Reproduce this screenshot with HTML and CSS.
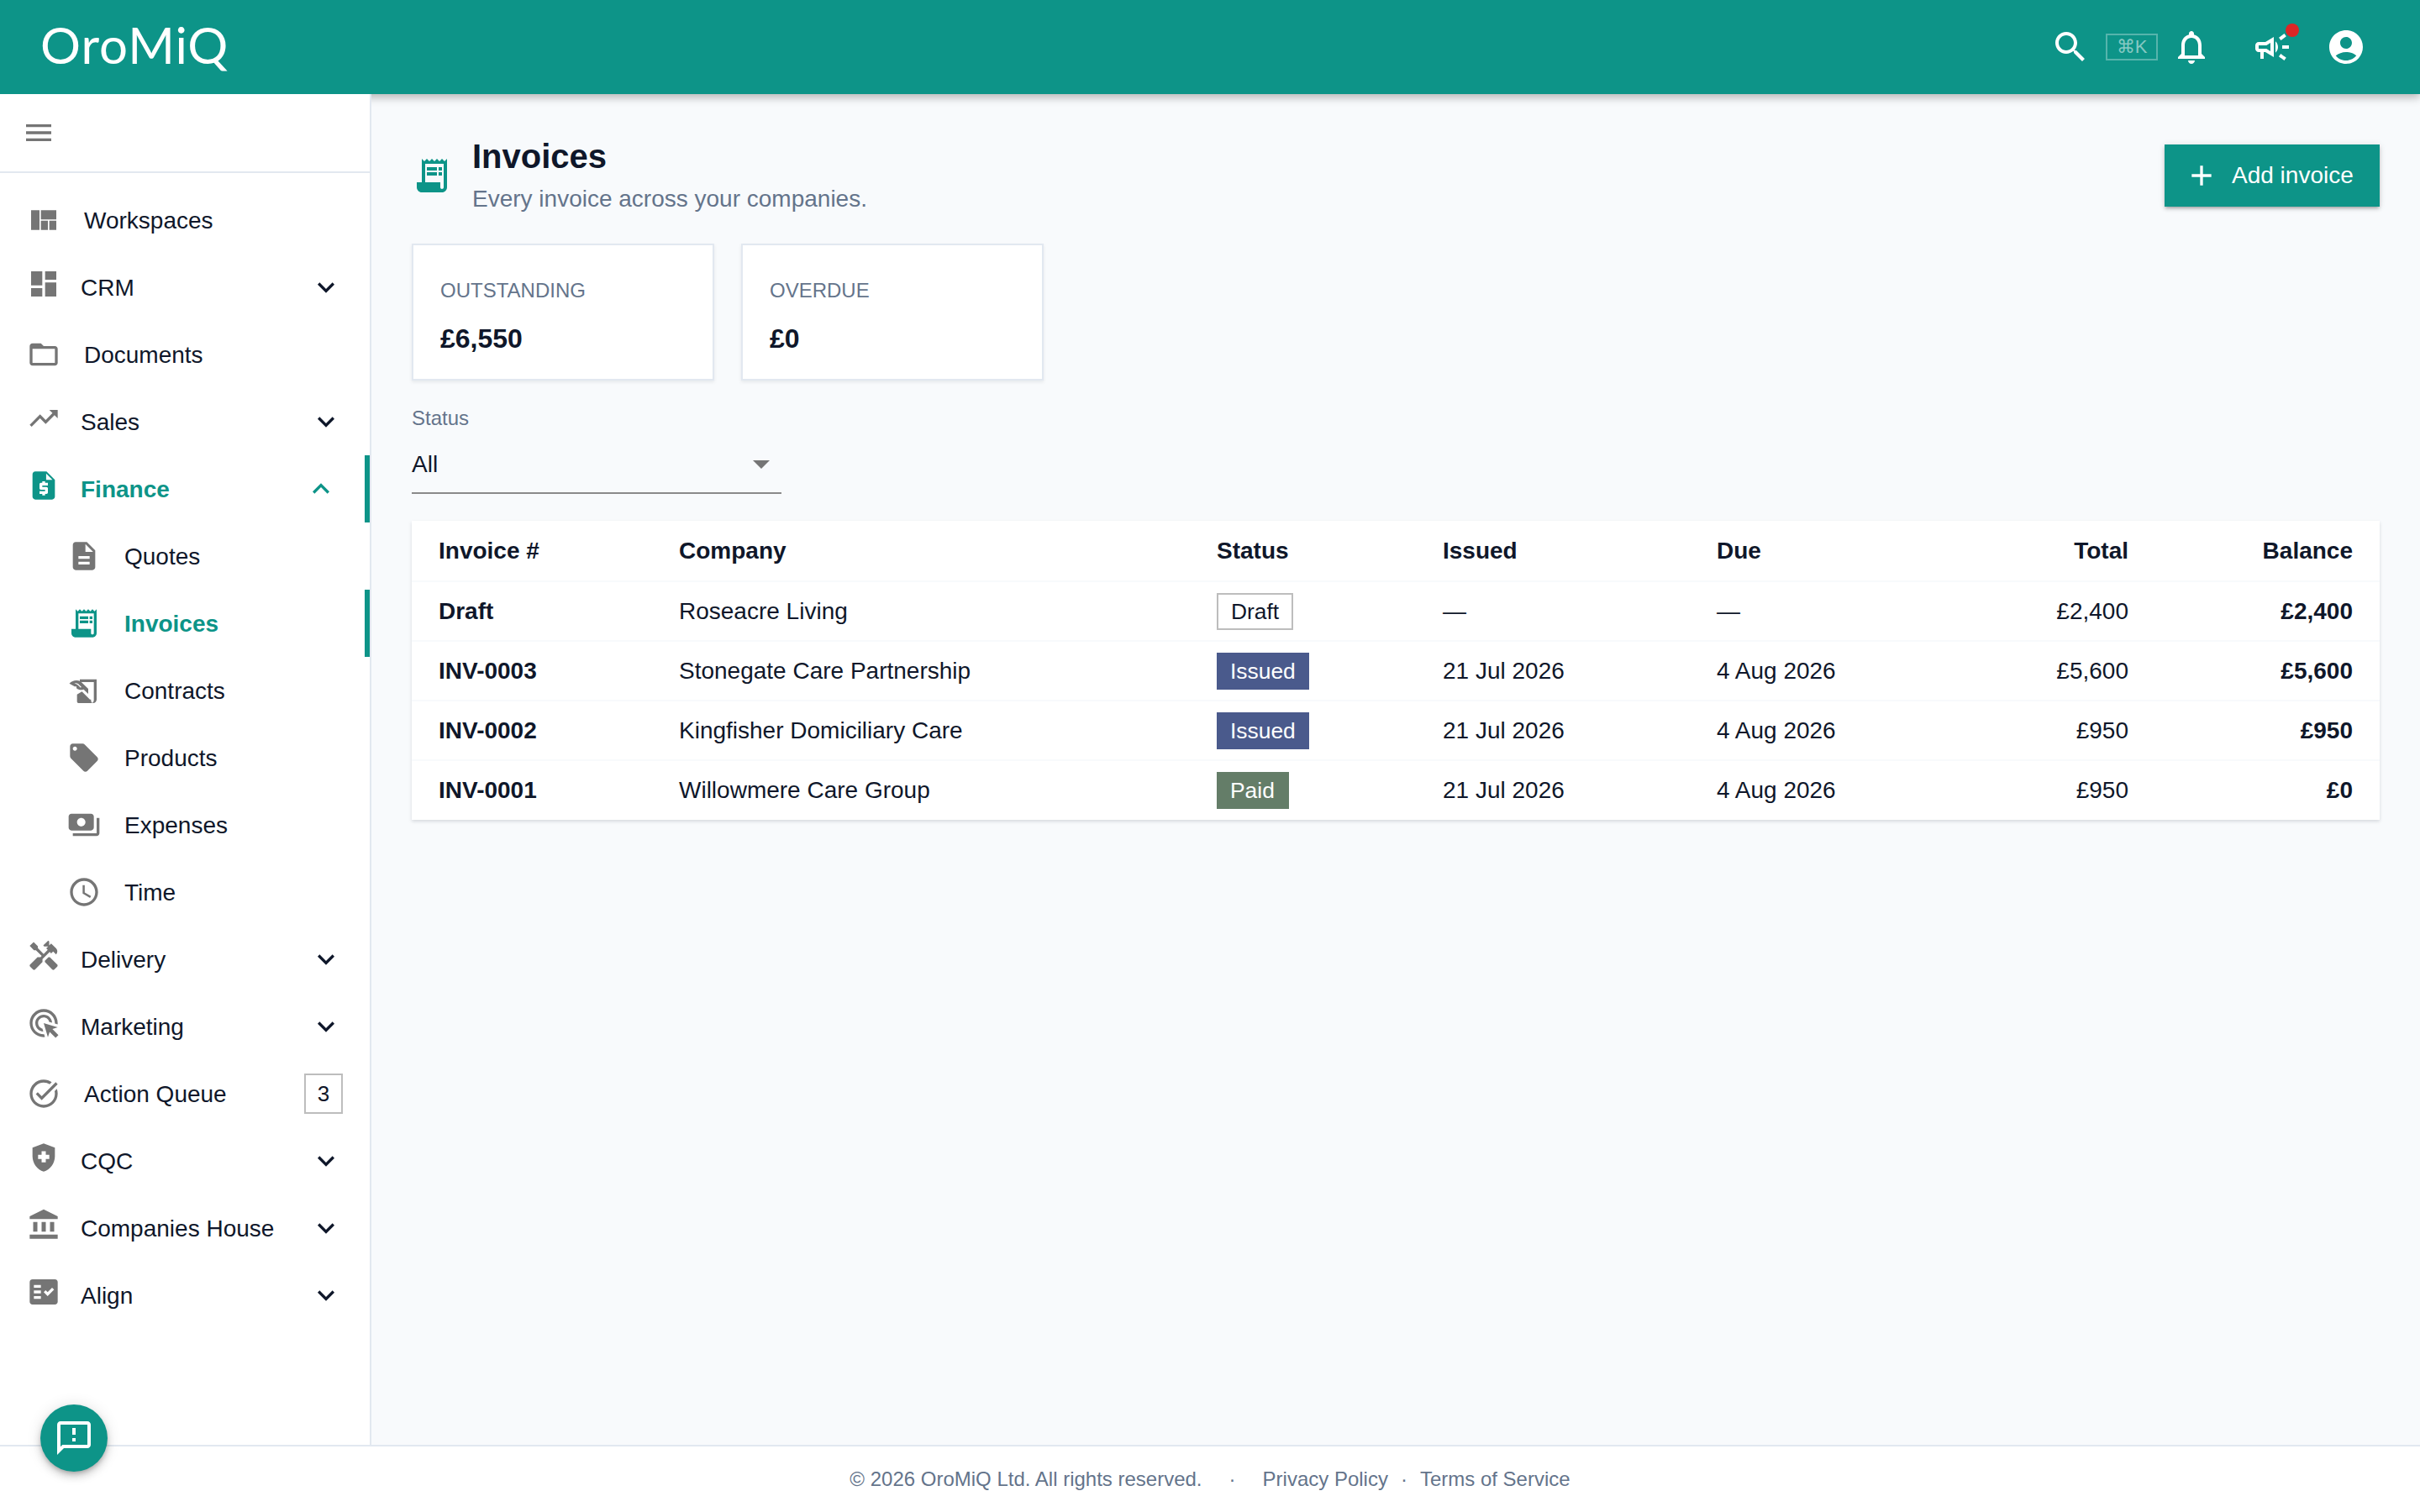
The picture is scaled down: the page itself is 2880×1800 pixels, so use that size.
FILE: index.html
```html
<!DOCTYPE html>
<html lang="en">
<head>
<meta charset="utf-8">
<title>Invoices - OroMiQ</title>
<link rel="stylesheet" href="styles.css">
</head>
<body>
<svg class="defs" aria-hidden="true">
  <symbol id="i-more" viewBox="0 0 24 24"><path d="M16.59 8.59L12 13.17 7.41 8.59 6 10l6 6 6-6z"/></symbol>
  <symbol id="i-less" viewBox="0 0 24 24"><path d="M12 8l-6 6 1.41 1.41L12 10.83l4.59 4.58L18 14z"/></symbol>
  <symbol id="i-receipt" viewBox="0 0 24 24"><path d="M19.5 3.5L18 2l-1.5 1.5L15 2l-1.5 1.5L12 2l-1.5 1.5L9 2 7.5 3.5 6 2v14H3v3c0 1.66 1.34 3 3 3h12c1.66 0 3-1.34 3-3V2l-1.5 1.5zM19 19c0 .55-.45 1-1 1s-1-.45-1-1v-3H8V5h11v14z"/><path d="M9 7h6v2H9zm7 0h2v2h-2zM9 10h6v2H9zm7 0h2v2h-2z"/></symbol>
</svg>
<div class="app">
  <header class="topbar">
    <div class="logo">OroMiQ</div>
    <div class="top-actions">
      <svg class="top-icon" viewBox="0 0 24 24"><path d="M15.5 14h-.79l-.28-.27C15.41 12.59 16 11.11 16 9.5 16 5.91 13.09 3 9.5 3S3 5.91 3 9.5 5.91 16 9.5 16c1.61 0 3.09-.59 4.23-1.57l.27.28v.79l5 4.99L20.49 19l-4.99-5zm-6 0C7.01 14 5 11.99 5 9.5S7.01 5 9.5 5 14 7.01 14 9.5 11.99 14 9.5 14z"/></svg>
      <span class="kbd">⌘K</span>
      <svg class="top-icon bell" viewBox="0 0 24 24"><path d="M12 22c1.1 0 2-.9 2-2h-4c0 1.1.9 2 2 2zm6-6v-5c0-3.07-1.63-5.64-4.5-6.32V4c0-.83-.67-1.5-1.5-1.5s-1.5.67-1.5 1.5v.68C7.64 5.36 6 7.92 6 11v5l-2 2v1h16v-1l-2-2zm-2 1H8v-6c0-2.48 1.51-4.5 4-4.5s4 2.02 4 4.5v6z"/></svg>
      <span class="megaphone">
        <svg class="top-icon" viewBox="0 0 24 24"><path d="M18 11v2h4v-2h-4zm-2 6.61c.96.71 2.21 1.65 3.2 2.39.4-.53.8-1.07 1.2-1.6-.99-.74-2.24-1.68-3.2-2.4-.4.54-.8 1.08-1.2 1.61zM20.4 5.6c-.4-.53-.8-1.07-1.2-1.6-.99.74-2.24 1.68-3.2 2.4.4.53.8 1.07 1.2 1.6.96-.72 2.21-1.65 3.2-2.4zM4 9c-1.1 0-2 .9-2 2v2c0 1.1.9 2 2 2h1v4h2v-4h1l5 3V6L8 9H4zm5.03 1.71L11 9.53v4.94l-1.97-1.18-.48-.29H4v-2h4.55l.48-.29zM15.5 12c0-1.33-.58-2.53-1.5-3.35v6.69c.92-.81 1.5-2.01 1.5-3.34z"/></svg>
        <span class="dot"></span>
      </span>
      <svg class="top-icon" viewBox="0 0 24 24"><path d="M12 2C6.48 2 2 6.48 2 12s4.48 10 10 10 10-4.48 10-10S17.52 2 12 2zm0 4c1.93 0 3.5 1.57 3.5 3.5S13.93 13 12 13s-3.5-1.57-3.5-3.5S10.07 6 12 6zm0 14c-2.03 0-4.43-.82-6.14-2.88C7.55 15.8 9.68 15 12 15s4.45.8 6.14 2.12C16.43 19.18 14.03 20 12 20z"/></svg>
    </div>
  </header>

  <div class="middle">
    <aside class="sidebar">
      <div class="side-head">
        <svg class="icon" viewBox="0 0 24 24"><path d="M3 18h18v-2H3v2zm0-5h18v-2H3v2zm0-7v2h18V6H3z"/></svg>
      </div>
      <nav class="nav">
        <a class="item leaf"><svg class="icon" viewBox="0 0 24 24"><path d="M3 5h6v14H3zM10 5h11v6.5H10zM10 12.5h5V19h-5zM16 12.5h5V19h-5z"/></svg><span>Workspaces</span></a>
        <a class="item parent"><svg class="icon" viewBox="0 0 24 24"><path d="M3 13h8V3H3v10zm0 8h8v-6H3v6zm10 0h8V11h-8v10zm0-18v6h8V3h-8z"/></svg><span>CRM</span><svg class="chev"><use href="#i-more"/></svg></a>
        <a class="item leaf"><svg class="icon" viewBox="0 0 24 24"><path d="M20 6h-8l-2-2H4c-1.1 0-2 .9-2 2v12c0 1.1.9 2 2 2h16c1.1 0 2-.9 2-2V8c0-1.1-.9-2-2-2zm0 12H4V8h16v10z"/></svg><span>Documents</span></a>
        <a class="item parent"><svg class="icon" viewBox="0 0 24 24"><path d="M16 6l2.29 2.29-4.88 4.88-4-4L2 16.59 3.41 18l6-6 4 4 6.3-6.29L22 12V6z"/></svg><span>Sales</span><svg class="chev"><use href="#i-more"/></svg></a>
        <a class="item parent active"><svg class="icon" viewBox="0 0 24 24"><path d="M14 2H6c-1.1 0-1.99.9-1.99 2L4 20c0 1.1.89 2 1.99 2H18c1.1 0 2-.9 2-2V8l-6-6zm1 10h-4v1h3c.55 0 1 .45 1 1v3c0 .55-.45 1-1 1h-1v1h-2v-1H9v-2h4v-1h-3c-.55 0-1-.45-1-1v-3c0-.55.45-1 1-1h1V9h2v1h2v2zm-1.25-4V3.5L18.25 8h-4.5z"/></svg><span>Finance</span><svg class="chev"><use href="#i-less"/></svg></a>
        <a class="item sub"><svg class="icon" viewBox="0 0 24 24"><path d="M14 2H6c-1.1 0-1.99.9-1.99 2L4 20c0 1.1.89 2 1.99 2H18c1.1 0 2-.9 2-2V8l-6-6zm2 16H8v-2h8v2zm0-4H8v-2h8v2zm-3-5V3.5L18.5 9H13z"/></svg><span>Quotes</span></a>
        <a class="item sub active"><svg class="icon"><use href="#i-receipt"/></svg><span>Invoices</span></a>
        <a class="item sub"><svg class="icon" viewBox="0 0 24 24"><path d="M9 4h12v14.5a2.5 2.5 0 0 1-2.5 2.5H17.8a2.4 2.4 0 0 0 1.2-2V6H9z"/><path fill-rule="evenodd" d="M1.5 7C3.8 4.6 7 4.3 9.6 5.5L15 10.8v3.6l-3.3-3.2c-1.800.8-3.700.4-5.100-.9V9.200H5.300zM5 7.100c1.200.1 2.300.6 3.100 1.400l1.500 1.500.5-.5-1.600-1.600C7.500 6.900 6.200 6.400 5 7.100z"/><path d="M10.500 12.800l5.700 5.700h.8V19c0 .7.400 1.500 1 2H8a1 1 0 0 1-1-1v-5.200z"/></svg><span>Contracts</span></a>
        <a class="item sub"><svg class="icon" viewBox="0 0 24 24"><path d="M21.41 11.58l-9-9C12.05 2.22 11.55 2 11 2H4c-1.100 0-2 .9-2 2v7c0 .55.22 1.050.59 1.420l9 9c.36.36.86.58 1.410.58.55 0 1.050-.22 1.410-.59l7-7c.37-.36.59-.86.59-1.410 0-.55-.23-1.060-.59-1.420zM5.500 7C4.670 7 4 6.330 4 5.500S4.670 4 5.500 4 7 4.670 7 5.500 6.330 7 5.500 7z"/></svg><span>Products</span></a>
        <a class="item sub"><svg class="icon" viewBox="0 0 24 24"><path d="M19 14V6c0-1.100-.9-2-2-2H3c-1.100 0-2 .9-2 2v8c0 1.100.9 2 2 2h14c1.100 0 2-.9 2-2zm-9-1c-1.660 0-3-1.340-3-3s1.340-3 3-3 3 1.340 3 3-1.340 3-3 3zm13-6v11c0 1.100-.9 2-2 2H4v-2h17V7h2z"/></svg><span>Expenses</span></a>
        <a class="item sub"><svg class="icon" viewBox="0 0 24 24"><path d="M11.990 2C6.470 2 2 6.480 2 12s4.470 10 9.990 10C17.520 22 22 17.520 22 12S17.520 2 11.990 2zM12 20c-4.420 0-8-3.580-8-8s3.580-8 8-8 8 3.580 8 8-3.580 8-8 8z"/><path d="M12.500 7H11v6l5.250 3.150.75-1.230-4.500-2.670z"/></svg><span>Time</span></a>
        <a class="item parent"><svg class="icon" viewBox="0 0 24 24"><path d="M21.670 18.170l-5.300-5.300h-.99l-2.540 2.540v.99l5.300 5.300c.39.39 1.020.39 1.410 0l2.120-2.120c.39-.38.39-1.020 0-1.410z"/><path d="M17.340 10.190l1.410-1.410 2.120 2.120c1.170-1.170 1.170-3.070 0-4.240l-3.540-3.540-1.410 1.410V1.710l-.7-.71-3.540 3.540.71.71h2.830l-1.410 1.410 1.060 1.060-2.890 2.890-4.130-4.130V5.060L4.830 2.040 2 4.870 5.030 7.900h1.410l4.130 4.130-.85.85H7.600l-5.300 5.300c-.39.39-.39 1.020 0 1.410l2.120 2.120c.39.39 1.020.39 1.410 0l5.300-5.300v-2.120l5.150-5.150 1.060 1.050z"/></svg><span>Delivery</span><svg class="chev"><use href="#i-more"/></svg></a>
        <a class="item parent"><svg class="icon" viewBox="0 0 24 24"><path d="M11.710 17.990C8.530 17.840 6 15.220 6 12c0-3.310 2.690-6 6-6 3.220 0 5.840 2.530 5.990 5.710l-2.100-.63C15.480 9.310 13.890 8 12 8c-2.210 0-4 1.790-4 4 0 1.890 1.310 3.480 3.080 3.890l.63 2.100zM22 12c0 .3-.01.6-.04.9l-1.970-.59c.01-.1.01-.21.01-.31 0-4.420-3.580-8-8-8s-8 3.580-8 8 3.580 8 8 8c.1 0 .21 0 .31-.01l.59 1.970c-.3.03-.6.04-.9.04-5.520 0-10-4.480-10-10S6.480 2 12 2s10 4.480 10 10zm-3.770 4.260L22 15l-10-3 3 10 1.260-3.770 4.270 4.270 1.980-1.980-4.280-4.260z"/></svg><span>Marketing</span><svg class="chev"><use href="#i-more"/></svg></a>
        <a class="item leaf"><svg class="icon" viewBox="0 0 24 24"><path d="M22 5.180L10.590 16.600l-4.240-4.240 1.410-1.410 2.830 2.830 10-10L22 5.180zm-2.210 5.040c.13.57.21 1.170.21 1.780 0 4.420-3.580 8-8 8s-8-3.580-8-8 3.580-8 8-8c1.580 0 3.040.46 4.280 1.250l1.440-1.440C16.100 2.670 14.130 2 12 2 6.480 2 2 6.480 2 12s4.480 10 10 10 10-4.480 10-10c0-1.190-.22-2.330-.6-3.390l-1.610 1.610z"/></svg><span>Action Queue</span><b class="count">3</b></a>
        <a class="item parent"><svg class="icon" viewBox="0 0 24 24"><path fill-rule="evenodd" d="M10.500 13H8v-3h2.500V7.500h3V10H16v3h-2.500v2.500h-3V13zM12 2L4 5v6.090c0 5.050 3.410 9.760 8 10.910 4.590-1.150 8-5.860 8-10.910V5l-8-3z"/></svg><span>CQC</span><svg class="chev"><use href="#i-more"/></svg></a>
        <a class="item parent"><svg class="icon" viewBox="0 0 24 24"><path d="M4.500 10v7h3v-7h-3zm6 0v7h3v-7h-3zM2 22h20v-3H2v3zm14.500-12v7h3v-7h-3zM12 1L2 6v2h20V6L12 1z"/></svg><span>Companies House</span><svg class="chev"><use href="#i-more"/></svg></a>
        <a class="item parent"><svg class="icon" viewBox="0 0 24 24"><path fill-rule="evenodd" d="M20 3H4c-1.100 0-2 .9-2 2v14c0 1.100.9 2 2 2h16c1.100 0 2-.9 2-2V5c0-1.100-.9-2-2-2zM10 17H5v-2h5v2zm0-4H5v-2h5v2zm0-4H5V7h5v2zm4.820 6L12 12.160l1.410-1.410 1.410 1.420L17.990 9l1.420 1.420L14.820 15z"/></svg><span>Align</span><svg class="chev"><use href="#i-more"/></svg></a>
      </nav>
    </aside>

    <main class="content">
      <div class="page-head">
        <svg class="page-icon"><use href="#i-receipt"/></svg>
        <div class="page-titles">
          <h1>Invoices</h1>
          <p>Every invoice across your companies.</p>
        </div>
        <button class="add-btn">
          <svg class="add-icon" viewBox="0 0 24 24"><path d="M19 13h-6v6h-2v-6H5v-2h6V5h2v6h6v2z"/></svg>
          <span>Add invoice</span>
        </button>
      </div>

      <div class="stats">
        <div class="stat"><div class="stat-label">OUTSTANDING</div><div class="stat-value">£6,550</div></div>
        <div class="stat"><div class="stat-label">OVERDUE</div><div class="stat-value">£0</div></div>
      </div>

      <div class="filter">
        <div class="filter-label">Status</div>
        <div class="select"><span>All</span><i class="caret"></i></div>
      </div>

      <div class="table-wrap">
        <table>
          <thead>
            <tr>
              <th class="c1">Invoice #</th><th class="c2">Company</th><th class="c3">Status</th><th class="c4">Issued</th><th class="c5">Due</th><th class="c6 num">Total</th><th class="c7 num">Balance</th>
            </tr>
          </thead>
          <tbody>
            <tr><td class="strong">Draft</td><td>Roseacre Living</td><td><span class="badge b-draft">Draft</span></td><td>—</td><td>—</td><td class="num">£2,400</td><td class="num strong">£2,400</td></tr>
            <tr><td class="strong">INV-0003</td><td>Stonegate Care Partnership</td><td><span class="badge b-issued">Issued</span></td><td>21 Jul 2026</td><td>4 Aug 2026</td><td class="num">£5,600</td><td class="num strong">£5,600</td></tr>
            <tr><td class="strong">INV-0002</td><td>Kingfisher Domiciliary Care</td><td><span class="badge b-issued">Issued</span></td><td>21 Jul 2026</td><td>4 Aug 2026</td><td class="num">£950</td><td class="num strong">£950</td></tr>
            <tr><td class="strong">INV-0001</td><td>Willowmere Care Group</td><td><span class="badge b-paid">Paid</span></td><td>21 Jul 2026</td><td>4 Aug 2026</td><td class="num">£950</td><td class="num strong">£0</td></tr>
          </tbody>
        </table>
      </div>
    </main>
  </div>

  <footer class="footer">
    <span>© 2026 OroMiQ Ltd. All rights reserved.</span>
    <span class="sep-wide">·</span>
    <a>Privacy Policy</a>
    <span class="sep">·</span>
    <a>Terms of Service</a>
  </footer>

  <button class="fab">
    <svg viewBox="0 0 24 24"><path d="M20 2H4c-1.100 0-1.990.9-1.990 2L2 22l4-4h14c1.100 0 2-.9 2-2V4c0-1.100-.9-2-2-2zm0 14H5.170L4 17.170V4h16v12zM11 12h2v2h-2zm0-6h2v4h-2z"/></svg>
  </button>
</div>
</body>
</html>
```

FILE: styles.css
```css
* { box-sizing: border-box; }
html, body { margin: 0; padding: 0; }
body {
  font-family: "Liberation Sans", Arial, sans-serif;
  font-size: 28px;
  color: #0f172a;
  background: #f8fafc;
}
.defs { position: absolute; width: 0; height: 0; }
.app { display: flex; flex-direction: column; height: 100vh; overflow: hidden; position: relative; }

/* top bar */
.topbar {
  position: relative;
  z-index: 1;
  flex: 0 0 112px;
  display: flex;
  align-items: center;
  justify-content: space-between;
  padding: 0 64px 0 48px;
  background: #0d9488;
  color: #fff;
  box-shadow: 0 4px 10px rgba(0,0,0,.28);
}
.logo { font-family: Lato, sans-serif; font-weight: 400; font-size: 60px; line-height: 1; letter-spacing: 1px; margin-bottom: 6px; }
.top-actions { display: flex; align-items: center; }
.top-icon { width: 48px; height: 48px; fill: #fff; display: block; }
.kbd {
  margin-left: 18px;
  width: 62px;
  height: 32px;
  border: 2px solid rgba(255,255,255,.3);
  color: rgba(255,255,255,.5);
  font-size: 22px;
  display: flex;
  align-items: center;
  justify-content: center;
}
.bell { margin-left: 16px; }
.megaphone { position: relative; margin-left: 48px; margin-right: 40px; }
.dot { position: absolute; left: 40px; top: -4px; width: 16px; height: 16px; border-radius: 50%; background: #dc2626; }

.middle { flex: 1; min-height: 0; display: flex; }

/* sidebar */
.sidebar {
  position: relative;
  z-index: 2;
  flex: 0 0 442px;
  background: #fff;
  border-right: 2px solid #e2e8f0;
}
.side-head {
  height: 94px;
  border-bottom: 2px solid #e2e8f0;
  padding-left: 26px;
  display: flex;
  align-items: center;
}
.icon { width: 40px; height: 40px; fill: #757575; flex: none; display: block; }
.nav { padding-top: 16px; }
.item {
  display: flex;
  align-items: center;
  height: 80px;
  padding: 0 32px;
  color: #0f172a;
}
.item > span { margin-left: 28px; padding-top: 2px; }
.parent > .icon { margin-bottom: 8px; }
.parent > span { margin-left: 24px; }
.sub { padding-left: 80px; }
.chev { width: 40px; height: 40px; margin-left: auto; fill: #0f172a; flex: none; }
.active { border-right: 6px solid #0d9488; color: #0d9488; font-weight: 700; }
.active .icon, .active .chev { fill: #0d9488; }
.count {
  margin-left: auto;
  width: 46px;
  height: 48px;
  border: 2px solid #bdbdbd;
  font-weight: 400;
  font-size: 26px;
  display: flex;
  align-items: center;
  justify-content: center;
}

/* content */
.content { flex: 1; min-width: 0; padding: 50px 48px 0; background: #f8fafc; }
.page-head { display: flex; align-items: center; }
.page-icon { width: 48px; height: 48px; fill: #0d9488; flex: none; }
.page-titles { margin-left: 24px; flex: 1; }
h1 { margin: 0; font-size: 40px; line-height: 48px; font-weight: 700; }
.page-titles p { margin: 6px 0 -2px; color: #64748b; line-height: 42px; }
.add-btn {
  width: 256px;
  height: 74px;
  padding: 0 0 0 24px;
  border: 0;
  background: #0d9488;
  color: #fff;
  font: inherit;
  display: flex;
  align-items: center;
  gap: 16px;
  box-shadow: 0 3px 3px -2px rgba(0,0,0,.2), 0 3px 4px rgba(0,0,0,.14), 0 1px 8px rgba(0,0,0,.12);
}
.add-icon { width: 40px; height: 40px; fill: #fff; }

.stats { display: flex; gap: 32px; margin-top: 34px; }
.stat {
  width: 360px;
  height: 163px;
  padding: 38px 32px 0;
  background: #fff;
  border: 2px solid #e2e8f0;
  box-shadow: 0 2px 4px rgba(15,23,42,.08);
}
.stat-label { font-size: 24px; line-height: 32px; color: #64748b; }
.stat-value { margin-top: 21px; font-size: 32px; line-height: 40px; font-weight: 700; }

.filter { margin-top: 29px; width: 440px; }
.filter-label { font-size: 24px; line-height: 32px; color: #64748b; }
.select {
  height: 75px;
  padding: 10px 14px 3px 0;
  margin-top: -1px;
  border-bottom: 2px solid #8a8a8a;
  display: flex;
  align-items: center;
  justify-content: space-between;
}
.caret { width: 0; height: 0; border-left: 10px solid transparent; border-right: 10px solid transparent; border-top: 10px solid #757575; }

.table-wrap {
  margin-top: 32px;
  background: #fff;
  box-shadow: 0 2px 4px rgba(15,23,42,.14);
}
table { width: 100%; border-collapse: collapse; table-layout: fixed; }
th, td { padding: 0 32px; text-align: left; font-size: 28px; }
th { height: 72px; font-weight: 700; border-bottom: 2px solid #f8fafc; }
td { height: 71px; border-bottom: 2px solid #f8fafc; }
tbody tr:last-child td { border-bottom: 0; }
.c1 { width: 286px; } .c2 { width: 640px; } .c3 { width: 269px; } .c4 { width: 326px; } .c5 { width: 354px; } .c6 { width: 200px; } .c7 { width: 267px; }
.num { text-align: right; }
.strong { font-weight: 700; }
.badge {
  display: inline-block;
  height: 44px;
  line-height: 44px;
  padding: 0 16px;
  font-size: 26.4px;
  vertical-align: middle;
}
.b-draft { background: #fff; border: 2px solid #bdbdbd; line-height: 40px; padding: 0 15px; }
.b-issued { background: #4a5a8c; color: #fff; }
.b-paid { background: #647d68; color: #fff; padding-right: 17px; }

/* footer */
.footer {
  position: relative;
  z-index: 3;
  flex: 0 0 80px;
  background: #fff;
  border-top: 2px solid #e2e8f0;
  display: flex;
  align-items: center;
  justify-content: center;
  font-size: 24px;
  color: #64748b;
}
.sep-wide { margin: 0 32px; }
.sep { margin: 0 15px; }

.fab {
  position: absolute;
  z-index: 4;
  left: 48px;
  bottom: 48px;
  width: 80px;
  height: 80px;
  padding: 16px;
  border: 0;
  border-radius: 50%;
  background: #0d9488;
  box-shadow: 0 3px 5px -1px rgba(0,0,0,.2), 0 6px 10px rgba(0,0,0,.14), 0 1px 18px rgba(0,0,0,.12);
}
.fab svg { display: block; width: 48px; height: 48px; fill: #fff; }
```
